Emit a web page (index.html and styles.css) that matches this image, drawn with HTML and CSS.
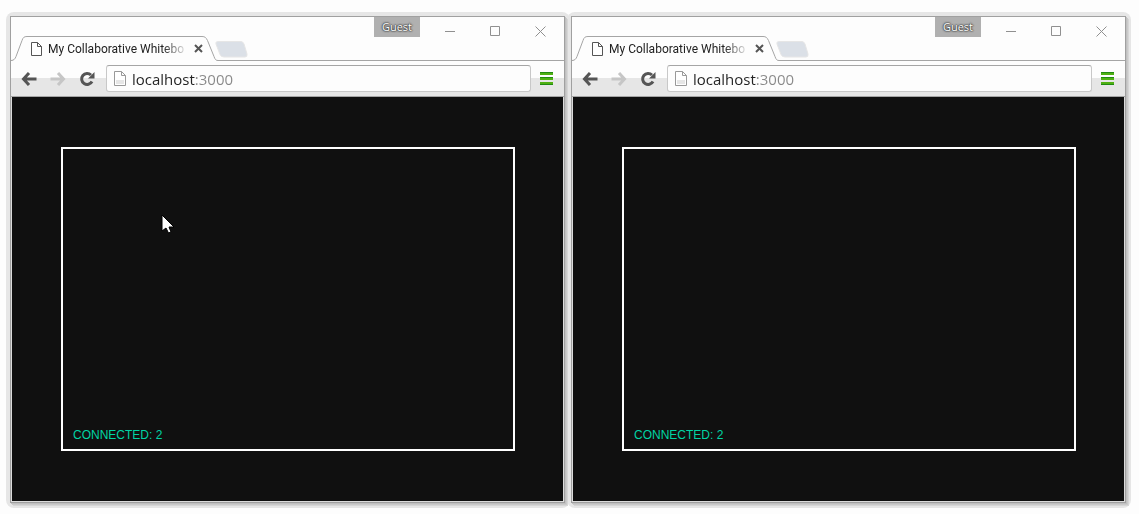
FILE: index.html
```html
<!DOCTYPE html>
<html lang="en">
<head>
<meta charset="utf-8">
<title>My Collaborative Whiteboard</title>
<link rel="stylesheet" href="styles.css">
</head>
<body>
<svg class="defs" aria-hidden="true">
  <symbol id="tab" viewBox="0 0 207 25"><path d="M0 24.5C3 24.3 4 23 5 20.500L11 4.500C12 1.500 13 .5 16 .5H191C194 .5 195 1.500 196.500 4.500L203 20.500C204 23.500 205 24.500 207 24.500V25H0z" fill="#fdfdfd"/><path d="M0 24.500C3 24.300 4 23 5 20.500L11 4.500C12 1.500 13 .5 16 .5H191C194 .5 195 1.500 196.500 4.500L203 20.500C204 23.500 205 24.500 207 24.500" fill="none" stroke="#a5a5a5"/></symbol>
  <symbol id="doc" viewBox="0 0 12 14"><path d="M1.500.5H7.500L11.500 4.500V13.500H1.500zM7.500.5V4.500H11.500" fill="#fff" stroke="currentColor"/></symbol>
  <symbol id="url-doc" viewBox="0 0 12 15"><path d="M.5.5H7.500L11.500 4.500V14.500H.5zM7.500.5V4.500H11.500" fill="#fff" stroke="currentColor"/><path d="M2 9H10V13H2z" fill="#e6e6e6"/></symbol>
  <symbol id="newtab" viewBox="0 0 33 17"><path d="M3 .5H26Q28 .5 29 3L32 13Q32.500 16 30 16H9Q6 16 5 13.500L1 3Q.2 .5 3 .5z" fill="#dbe0e7" stroke="#e6e6e6"/></symbol>
  <symbol id="back" viewBox="0 0 16 14"><path d="M8 1L2.500 7L8 13M2.500 7H15.500" fill="none" stroke="currentColor" stroke-width="3"/></symbol>
  <symbol id="forward" viewBox="0 0 16 14"><path d="M8 1L13.500 7L8 13M13.500 7H.5" fill="none" stroke="currentColor" stroke-width="3"/></symbol>
  <symbol id="reload" viewBox="0 0 16 16"><path d="M12 4A5.500 5.500 0 1 0 13 10.500" fill="none" stroke="currentColor" stroke-width="3"/><path d="M15.500 1V7.500H9z" fill="currentColor"/></symbol>
  <symbol id="menu" viewBox="0 0 13 13"><path d="M0 0H13V3H0zM0 5H13V8H0zM0 10H13V13H0z" fill="#4fb012"/><path d="M0 .5H13M0 5.500H13M0 12.500H13" stroke="#228b12"/></symbol>
  <symbol id="min" viewBox="0 0 11 11"><path d="M0 5.500H10" stroke="currentColor"/></symbol>
  <symbol id="max" viewBox="0 0 11 11"><path d="M.5 .5H9.500V9.500H.5z" fill="none" stroke="currentColor"/></symbol>
  <symbol id="x" viewBox="0 0 11 11"><path d="M.5 .5L10.500 10.500M10.500 .5L.5 10.500" stroke="currentColor"/></symbol>
  <symbol id="tabx" viewBox="0 0 9 9"><path d="M1 1L8 8M8 1L1 8" stroke="currentColor" stroke-width="2"/></symbol>
</svg>
<main class="desktop">
  <section class="window" aria-label="First browser">
    <header class="titlebar">
      <div class="tab">
        <svg class="tab-shape"><use href="#tab"/></svg>
        <svg class="tab-icon"><use href="#doc"/></svg>
        <span class="tab-title">My Collaborative Whitebo</span>
        <button class="tab-close" aria-label="Close tab"><svg><use href="#tabx"/></svg></button>
      </div>
      <button class="new-tab" aria-label="New tab"><svg><use href="#newtab"/></svg></button>
      <div class="controls">
        <button class="guest">Guest</button>
        <button class="control" aria-label="Minimize"><svg><use href="#min"/></svg></button>
        <button class="control" aria-label="Maximize"><svg><use href="#max"/></svg></button>
        <button class="control" aria-label="Close"><svg><use href="#x"/></svg></button>
      </div>
    </header>
    <nav class="toolbar">
      <button class="nav-button" aria-label="Back"><svg><use href="#back"/></svg></button>
      <button class="nav-button inactive" aria-label="Forward"><svg><use href="#forward"/></svg></button>
      <button class="nav-button reload" aria-label="Reload"><svg><use href="#reload"/></svg></button>
      <label class="address"><svg><use href="#url-doc"/></svg><input class="url" type="text" value="localhost:3000" aria-label="Address"></label>
      <button class="menu" aria-label="Menu"><svg><use href="#menu"/></svg></button>
    </nav>
    <div class="page">
      <div class="board"><p class="status">CONNECTED: 2</p></div>
      <svg class="cursor" viewBox="0 0 14 20"><path d="M1 1V17L5 14L7.500 19L10 18L8 13H13z" fill="#fff" stroke="#000" stroke-width="1"/></svg>
    </div>
  </section>
  <section class="window" aria-label="Second browser">
    <header class="titlebar">
      <div class="tab">
        <svg class="tab-shape"><use href="#tab"/></svg>
        <svg class="tab-icon"><use href="#doc"/></svg>
        <span class="tab-title">My Collaborative Whitebo</span>
        <button class="tab-close" aria-label="Close tab"><svg><use href="#tabx"/></svg></button>
      </div>
      <button class="new-tab" aria-label="New tab"><svg><use href="#newtab"/></svg></button>
      <div class="controls">
        <button class="guest">Guest</button>
        <button class="control" aria-label="Minimize"><svg><use href="#min"/></svg></button>
        <button class="control" aria-label="Maximize"><svg><use href="#max"/></svg></button>
        <button class="control" aria-label="Close"><svg><use href="#x"/></svg></button>
      </div>
    </header>
    <nav class="toolbar">
      <button class="nav-button" aria-label="Back"><svg><use href="#back"/></svg></button>
      <button class="nav-button inactive" aria-label="Forward"><svg><use href="#forward"/></svg></button>
      <button class="nav-button reload" aria-label="Reload"><svg><use href="#reload"/></svg></button>
      <label class="address"><svg><use href="#url-doc"/></svg><input class="url" type="text" value="localhost:3000" aria-label="Address"></label>
      <button class="menu" aria-label="Menu"><svg><use href="#menu"/></svg></button>
    </nav>
    <div class="page">
      <div class="board"><p class="status">CONNECTED: 2</p></div>
    </div>
  </section>
</main>
</body>
</html>
```

FILE: styles.css
```css
* { box-sizing: border-box; }
body { margin: 0; background: #fdfdfd; font-family: "Open Sans", "Noto Sans", sans-serif; }
.defs { position: absolute; width: 0; height: 0; }
button { border: 0; padding: 0; background: none; font: inherit; }
svg { display: block; flex: none; }

.desktop {
  display: grid;
  grid-template-columns: 1fr 1fr;
  gap: 6px;
  min-height: 100vh;
  padding: 16px 13px 11px 10px;
}
.window {
  position: relative;
  display: flex;
  flex-direction: column;
  min-width: 0;
  border: 1px solid #a0a0a0;
  background: #dcdcdc;
  box-shadow: 1px 1px 0 #c0c0c0, 2px 2px 0 #cacaca, 3px 3px 0 #d6d6d6;
}
.window::before {
  content: "";
  position: absolute;
  z-index: -1;
  inset: -5px -6px -6px -5px;
  border-radius: 8px;
  background: #e6e6e6;
}
.window:first-child { z-index: auto; }

.titlebar {
  display: flex;
  align-items: flex-end;
  height: 44px;
  border-bottom: 1px solid #a5a5a5;
  background: #fdfdfd;
}
.tab {
  position: relative;
  display: flex;
  align-items: center;
  width: 207px;
  height: 25px;
  margin-bottom: -1px;
  padding: 0 13px 0 19px;
}
.tab-shape { position: absolute; inset: 0; width: 207px; height: 25px; }
.tab-icon { position: relative; width: 12px; height: 14px; color: #555; }
.tab-title {
  position: relative;
  width: 138px;
  margin-left: 6px;
  white-space: nowrap;
  font: 12px/20px Roboto, "Open Sans", sans-serif;
  color: #222;
  -webkit-mask-image: linear-gradient(90deg, #000 115px, transparent 140px);
  mask-image: linear-gradient(90deg, #000 115px, transparent 140px);
}
.tab-close { position: relative; margin-left: 8px; color: #555; }
.tab-close svg { width: 9px; height: 9px; }
.new-tab { margin: 0 0 2px -3px; }
.new-tab svg { width: 33px; height: 17px; }
.controls { display: flex; align-self: flex-start; margin-left: auto; padding-right: 1px; }
.guest {
  width: 46px;
  height: 20px;
  margin-right: 8px;
  background: #b0b0b0;
  color: #fff;
  font-size: 11px;
  line-height: 20px;
  text-shadow: 0 0 1px #333, 0 0 2px #333, 0 0 2px #333;
}
.control { display: flex; justify-content: center; align-items: center; width: 45px; height: 29px; color: #909090; }
.control svg { width: 11px; height: 11px; }

.toolbar {
  display: flex;
  align-items: center;
  height: 36px;
  padding: 0 11px 0 10px;
  border-bottom: 1px solid #a5a5a5;
  background: linear-gradient(#fdfdfd 17px, #e6e6e6 17px);
}
.nav-button { width: 16px; margin-right: 13px; color: #555; }
.nav-button svg { width: 16px; height: 14px; }
.reload { width: 16px; margin-right: 11px; }
.reload svg { width: 16px; height: 16px; }
.inactive { color: #c6c6c6; }
.address {
  display: flex;
  align-items: center;
  flex: 1;
  min-width: 0;
  height: 27px;
  padding-left: 7px;
  border: 1px solid #c8c8c8;
  border-top-color: #a5a5a5;
  border-radius: 3px;
  background: #fdfdfd;
}
.address svg { width: 12px; height: 15px; color: #999; }
.url {
  flex: 1;
  min-width: 0;
  height: 24px;
  margin-left: 6px;
  padding: 0;
  border: 0;
  outline: 0;
  font: 15px/24px "Open Sans", "Noto Sans", sans-serif;
  color: transparent;
  background: linear-gradient(90deg, #222 63px, #888 63px);
  -webkit-background-clip: text;
  background-clip: text;
}
.menu { margin-left: 9px; }
.menu svg { width: 13px; height: 13px; }

.page {
  position: relative;
  display: flex;
  flex: 1;
  margin: 0 1px 1px;
  padding: 50px 48px 50px 49px;
  background: #101010;
}
.board {
  display: flex;
  flex: 1;
  align-items: flex-end;
  padding: 0 10px 6px;
  border: 2px solid #fff;
}
.status { margin: 0; color: #00d4a4; font: 12px/16px "Liberation Sans", Arial, sans-serif; }
.cursor { position: absolute; left: 149px; top: 117px; width: 14px; height: 20px; }
```
